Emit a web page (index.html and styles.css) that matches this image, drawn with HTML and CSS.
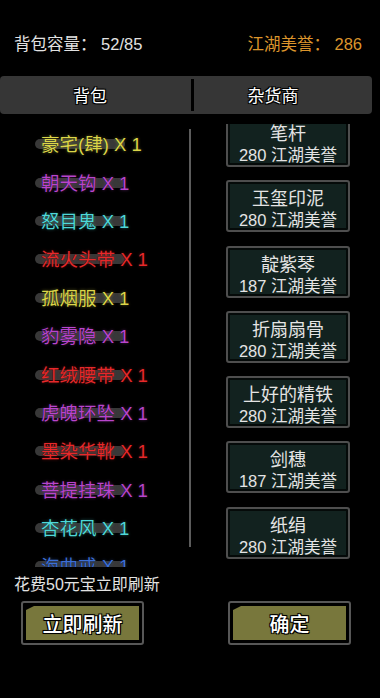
FILE: index.html
```html
<!DOCTYPE html>
<html lang="zh-CN">
<head>
<meta charset="utf-8">
<title>背包</title>
<link rel="stylesheet" href="styles.css">
</head>
<body>
<div class="page">
  <div class="header">
    <div class="stat">背包容量： 52/85</div>
    <div class="stat fame">江湖美誉： 286</div>
  </div>
  <div class="tabs">
    <div class="tab tab-left">背包</div>
    <div class="tab-divider"></div>
    <div class="tab tab-right">杂货商</div>
  </div>
  <div class="content">
    <div class="bag">
      <div class="item yellow"><span>豪宅(肆) X 1</span></div>
      <div class="item purple"><span>朝天钩 X 1</span></div>
      <div class="item cyan"><span>怒目鬼 X 1</span></div>
      <div class="item red"><span>流火头带 X 1</span></div>
      <div class="item yellow"><span>孤烟服 X 1</span></div>
      <div class="item purple"><span>豹雾隐 X 1</span></div>
      <div class="item red"><span>红绒腰带 X 1</span></div>
      <div class="item purple"><span>虎魄环坠 X 1</span></div>
      <div class="item red"><span>墨染华靴 X 1</span></div>
      <div class="item purple"><span>菩提挂珠 X 1</span></div>
      <div class="item cyan"><span>杏花风 X 1</span></div>
      <div class="item blue"><span>海曲戒 X 1</span></div>
    </div>
    <div class="scrollbar"></div>
    <div class="shop">
      <div class="shop-list">
        <div class="card"><div class="card-name">笔杆</div><div class="card-price">280 江湖美誉</div></div>
        <div class="card"><div class="card-name">玉玺印泥</div><div class="card-price">280 江湖美誉</div></div>
        <div class="card"><div class="card-name">靛紫琴</div><div class="card-price">187 江湖美誉</div></div>
        <div class="card"><div class="card-name">折扇扇骨</div><div class="card-price">280 江湖美誉</div></div>
        <div class="card"><div class="card-name">上好的精铁</div><div class="card-price">280 江湖美誉</div></div>
        <div class="card"><div class="card-name">剑穗</div><div class="card-price">187 江湖美誉</div></div>
        <div class="card"><div class="card-name">纸绢</div><div class="card-price">280 江湖美誉</div></div>
      </div>
    </div>
  </div>
  <div class="hint">花费50元宝立即刷新</div>
  <div class="buttons">
    <div class="btn"><div class="btn-face">立即刷新</div></div>
    <div class="btn"><div class="btn-face">确定</div></div>
  </div>
</div>
</body>
</html>
```
FILE: styles.css
```css
* {
  box-sizing: border-box;
  margin: 0;
  padding: 0;
}

html, body {
  background: #000;
}

body {
  width: 380px;
  height: 698px;
  overflow: hidden;
  font-family: "Liberation Sans", "Noto Sans CJK SC", sans-serif;
  color: #e2e2e2;
}

.header {
  display: flex;
  justify-content: space-between;
  align-items: flex-start;
  height: 76px;
  padding: 34px 18px 0 14px;
}

.stat {
  font-size: 16.5px;
  line-height: 20px;
  white-space: pre;
}

.stat.fame {
  color: #dc952c;
}

.tabs {
  display: flex;
  align-items: center;
  width: 372px;
  height: 38px;
  background: #363636;
  border-radius: 4px;
}

.tab {
  font-size: 17px;
  line-height: 22px;
  color: #fff;
  text-align: center;
  padding-top: 3px;
  text-shadow: -1px -1px 0 #000, 1px -1px 0 #000, -1px 1px 0 #000, 1px 1px 0 #000, 0 0 2px #000;
}

.tab-left {
  width: 180px;
}

.tab-divider {
  width: 3px;
  height: 32px;
  margin-left: 11px;
  background: #000;
}

.tab-right {
  width: 158px;
}

.content {
  display: flex;
  height: 443px;
  margin-top: 10px;
}

.bag {
  width: 189px;
  height: 443px;
  overflow: hidden;
}

.item {
  position: relative;
  display: flex;
  align-items: center;
  height: 38.4px;
  padding-left: 41px;
  font-size: 18.5px;
  white-space: nowrap;
}

.item::before {
  content: "";
  position: absolute;
  left: 35px;
  top: 50%;
  width: 90px;
  height: 10px;
  margin-top: -4px;
  border-radius: 5px;
  background: #383838;
}

.item span {
  position: relative;
}

.yellow {
  color: #dcd64a;
  text-shadow: 0 0 1px #000, 0 0 3px rgba(220, 214, 74, 0.5);
}

.purple {
  color: #b845cc;
  text-shadow: 0 0 1px #000, 0 0 3px rgba(184, 69, 204, 0.5);
}

.cyan {
  color: #4fd8d8;
  text-shadow: 0 0 1px #000, 0 0 3px rgba(79, 216, 216, 0.5);
}

.red {
  color: #e6292b;
  text-shadow: 0 0 1px #000, 0 0 3px rgba(230, 41, 43, 0.5);
}

.blue {
  color: #3d6fd6;
  text-shadow: 0 0 1px #000, 0 0 3px rgba(61, 111, 214, 0.5);
}

.scrollbar {
  width: 2px;
  height: 418px;
  margin-top: 5px;
  background: #5c5c5c;
}

.shop {
  width: 124px;
  height: 443px;
  margin-left: 35px;
  overflow: hidden;
}

.shop-list {
  display: flex;
  flex-direction: column;
  gap: 13.3px;
  margin-top: -9px;
}

.card {
  flex: none;
  height: 52px;
  padding-top: 7px;
  border: 2px solid #4e4e4e;
  border-radius: 3px;
  background: #12221f;
  box-shadow: inset 0 0 0 2px #050a09;
  text-align: center;
  color: #e4e4e4;
  white-space: nowrap;
}

.card-name {
  font-size: 18px;
  line-height: 21px;
}

.card-price {
  font-size: 16.5px;
  line-height: 21px;
}

.hint {
  margin-top: 8px;
  padding-left: 14px;
  font-size: 16px;
  line-height: 20px;
  color: #e2e2e2;
}

.buttons {
  display: flex;
  gap: 84px;
  margin-top: 6px;
  padding-left: 21px;
}

.btn {
  width: 123px;
  height: 44px;
  padding: 3px;
  border: 2px solid #575757;
  border-radius: 3px;
  background: #000;
}

.btn-face {
  display: flex;
  align-items: center;
  justify-content: center;
  height: 100%;
  background: #78773c;
  clip-path: polygon(8px 0, 100% 0, 100% 100%, 0 100%, 0 4px);
  font-size: 20px;
  font-weight: 500;
  color: #fff;
  text-shadow: -1px -1px 0 #000, 1px -1px 0 #000, -1px 1px 0 #000, 1px 1px 0 #000, 0 0 2px #000;
}
```
